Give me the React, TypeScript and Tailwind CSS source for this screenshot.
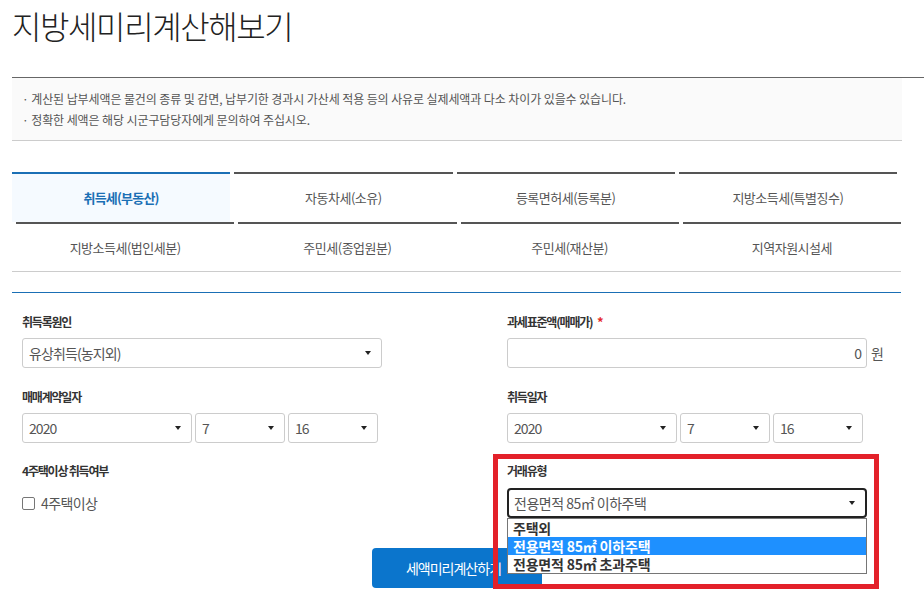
import React from "react";

const FONT = { fontFamily: '"Noto Sans CJK KR", "Noto Sans", sans-serif' };

function Caret() {
  return <span className="inline-block w-0 h-0 border-x-[3px] border-x-transparent border-t-[4px] border-t-[#222]" />;
}

function Select({ value, className = "" }: { value: string; className?: string }) {
  return (
    <div
      className={`h-[30px] border border-[#ccc] rounded-[3px] bg-white flex items-center justify-between pl-[6px] pr-[10px] text-[14px] text-[#555] tracking-[-0.9px] ${className}`}
    >
      <span>{value}</span>
      <Caret />
    </div>
  );
}

function Label({ children }: { children: React.ReactNode }) {
  return <div className="h-[16px] leading-[16px] text-[12px] font-bold text-[#333] tracking-[-1.2px]">{children}</div>;
}

const row1 = ["취득세(부동산)", "자동차세(소유)", "등록면허세(등록분)", "지방소득세(특별징수)"];
const row2 = ["지방소득세(법인세분)", "주민세(종업원분)", "주민세(재산분)", "지역자원시설세"];

export default function App() {
  return (
    <div className="relative w-[924px] h-[598px] overflow-hidden bg-white" style={FONT}>
      {/* Title */}
      <div className="h-[77px] pl-[12px]">
        <h1 className="leading-[50px] text-[32px] font-light text-[#222] tracking-[-1.4px]">지방세미리계산해보기</h1>
      </div>
      <div className="ml-[12px] border-t border-[#666]" />
      <div className="ml-[12px] w-[890px] bg-[#fafafa] border-b border-[#ccc] pt-[10px] pb-[10px] pl-[10px] text-[12px] leading-[21px] text-[#555] tracking-[-0.1px]">
        <p>· 계산된 납부세액은 물건의 종류 및 감면, 납부기한 경과시 가산세 적용 등의 사유로 실제세액과 다소 차이가 있을수 있습니다.</p>
        <p>· 정확한 세액은 해당 시군구담당자에게 문의하여 주십시오.</p>
      </div>

      {/* Tabs */}
      <div className="ml-[12px] w-[889px] mt-[31px] border-b border-[#ccc]">
        <div className="grid grid-cols-4 gap-x-[4px] pr-[4px]">
          {row1.map((t, i) => (
            <div
              key={t}
              className={
                i === 0
                  ? "h-[50px] border-t-2 border-[#1a6fb5] bg-[#f5faff] flex items-center justify-center text-[13px] font-bold text-[#1a6fb5] tracking-[-0.8px]"
                  : "h-[50px] border-t-2 border-[#555] flex items-center justify-center text-[13px] text-[#555] tracking-[-0.5px]"
              }
            >
              {t}
            </div>
          ))}
        </div>
        <div className="grid grid-cols-4 gap-x-[4px] pl-[4px]">
          {row2.map((t) => (
            <div
              key={t}
              className="h-[49px] border-t-2 border-[#555] flex items-center justify-center text-[13px] text-[#555] tracking-[-0.5px]"
            >
              {t}
            </div>
          ))}
        </div>
      </div>
      <div className="ml-[12px] w-[889px] mt-[20px] border-t border-[#1a6fb5]" />

      {/* Form */}
      <div className="ml-[12px] w-[889px] px-[10px] pt-[21px]">
        <div className="grid grid-cols-[485px_1fr]">
          {/* Row 1 */}
          <div>
            <Label>취득록원인</Label>
            <Select value="유상취득(농지외)" className="mt-[8px] w-[360px]" />
          </div>
          <div>
            <Label>
              과세표준액(매매가) <span className="text-[#e52a2a] text-[13px] ml-[3px]">*</span>
            </Label>
            <div className="mt-[8px] flex items-center">
              <div className="w-[360px] h-[30px] border border-[#ccc] rounded-[3px] flex items-center justify-end pr-[4px] text-[14px] text-[#555]">
                0
              </div>
              <span className="ml-[4px] text-[14px] text-[#555]">원</span>
            </div>
          </div>

          {/* Row 2 */}
          <div className="mt-[21px]">
            <Label>매매계약일자</Label>
            <div className="mt-[8px] flex gap-[3px]">
              <Select value="2020" className="w-[170px]" />
              <Select value="7" className="w-[90px]" />
              <Select value="16" className="w-[90px]" />
            </div>
          </div>
          <div className="mt-[21px]">
            <Label>취득일자</Label>
            <div className="mt-[8px] flex gap-[3px]">
              <Select value="2020" className="w-[170px]" />
              <Select value="7" className="w-[90px]" />
              <Select value="16" className="w-[90px]" />
            </div>
          </div>

          {/* Row 3 */}
          <div className="mt-[20px]">
            <Label>4주택이상 취득여부</Label>
            <div className="mt-[9px] h-[30px] flex items-center">
              <span className="w-[13px] h-[13px] border border-[#767676] rounded-[2px] bg-white" />
              <span className="ml-[6px] text-[14px] text-[#555] tracking-[-0.6px]">4주택이상</span>
            </div>
          </div>
          <div className="mt-[20px]">
            <Label>거래유형</Label>
            <div className="relative mt-[9px] w-[360px]">
              <div className="h-[30px] border-2 border-[#222] rounded-[4px] bg-white flex items-center justify-between pl-[5px] pr-[10px] text-[14px] text-[#555] tracking-[-0.5px]">
                <span>전용면적 85㎡ 이하주택</span>
                <Caret />
              </div>
              <div className="absolute left-0 top-[30px] w-[360px] z-20 bg-white border border-[#767676] text-[14px] font-bold tracking-[-0.2px]">
                <div className="h-[18px] leading-[18px] pl-[5px] text-[#333] overflow-hidden">주택외</div>
                <div className="h-[18px] leading-[18px] pl-[5px] bg-[#1e90ff] text-white overflow-hidden">전용면적 85㎡ 이하주택</div>
                <div className="h-[18px] leading-[18px] pl-[5px] text-[#333] overflow-hidden">전용면적 85㎡ 초과주택</div>
              </div>
            </div>
          </div>
        </div>

        {/* Button */}
        <div className="mt-[30px] flex justify-center">
          <button className="w-[170px] h-[40px] rounded-[4px] bg-[#0b75cc] text-white text-[14px] tracking-[-1px] pr-[6px]">
            세액미리계산하기
          </button>
        </div>
      </div>

      {/* Red annotation frame */}
      <div className="absolute left-[493px] top-[454px] w-[386px] h-[135px] border-[5px] border-[#e3212a] z-30 pointer-events-none" />
    </div>
  );
}
